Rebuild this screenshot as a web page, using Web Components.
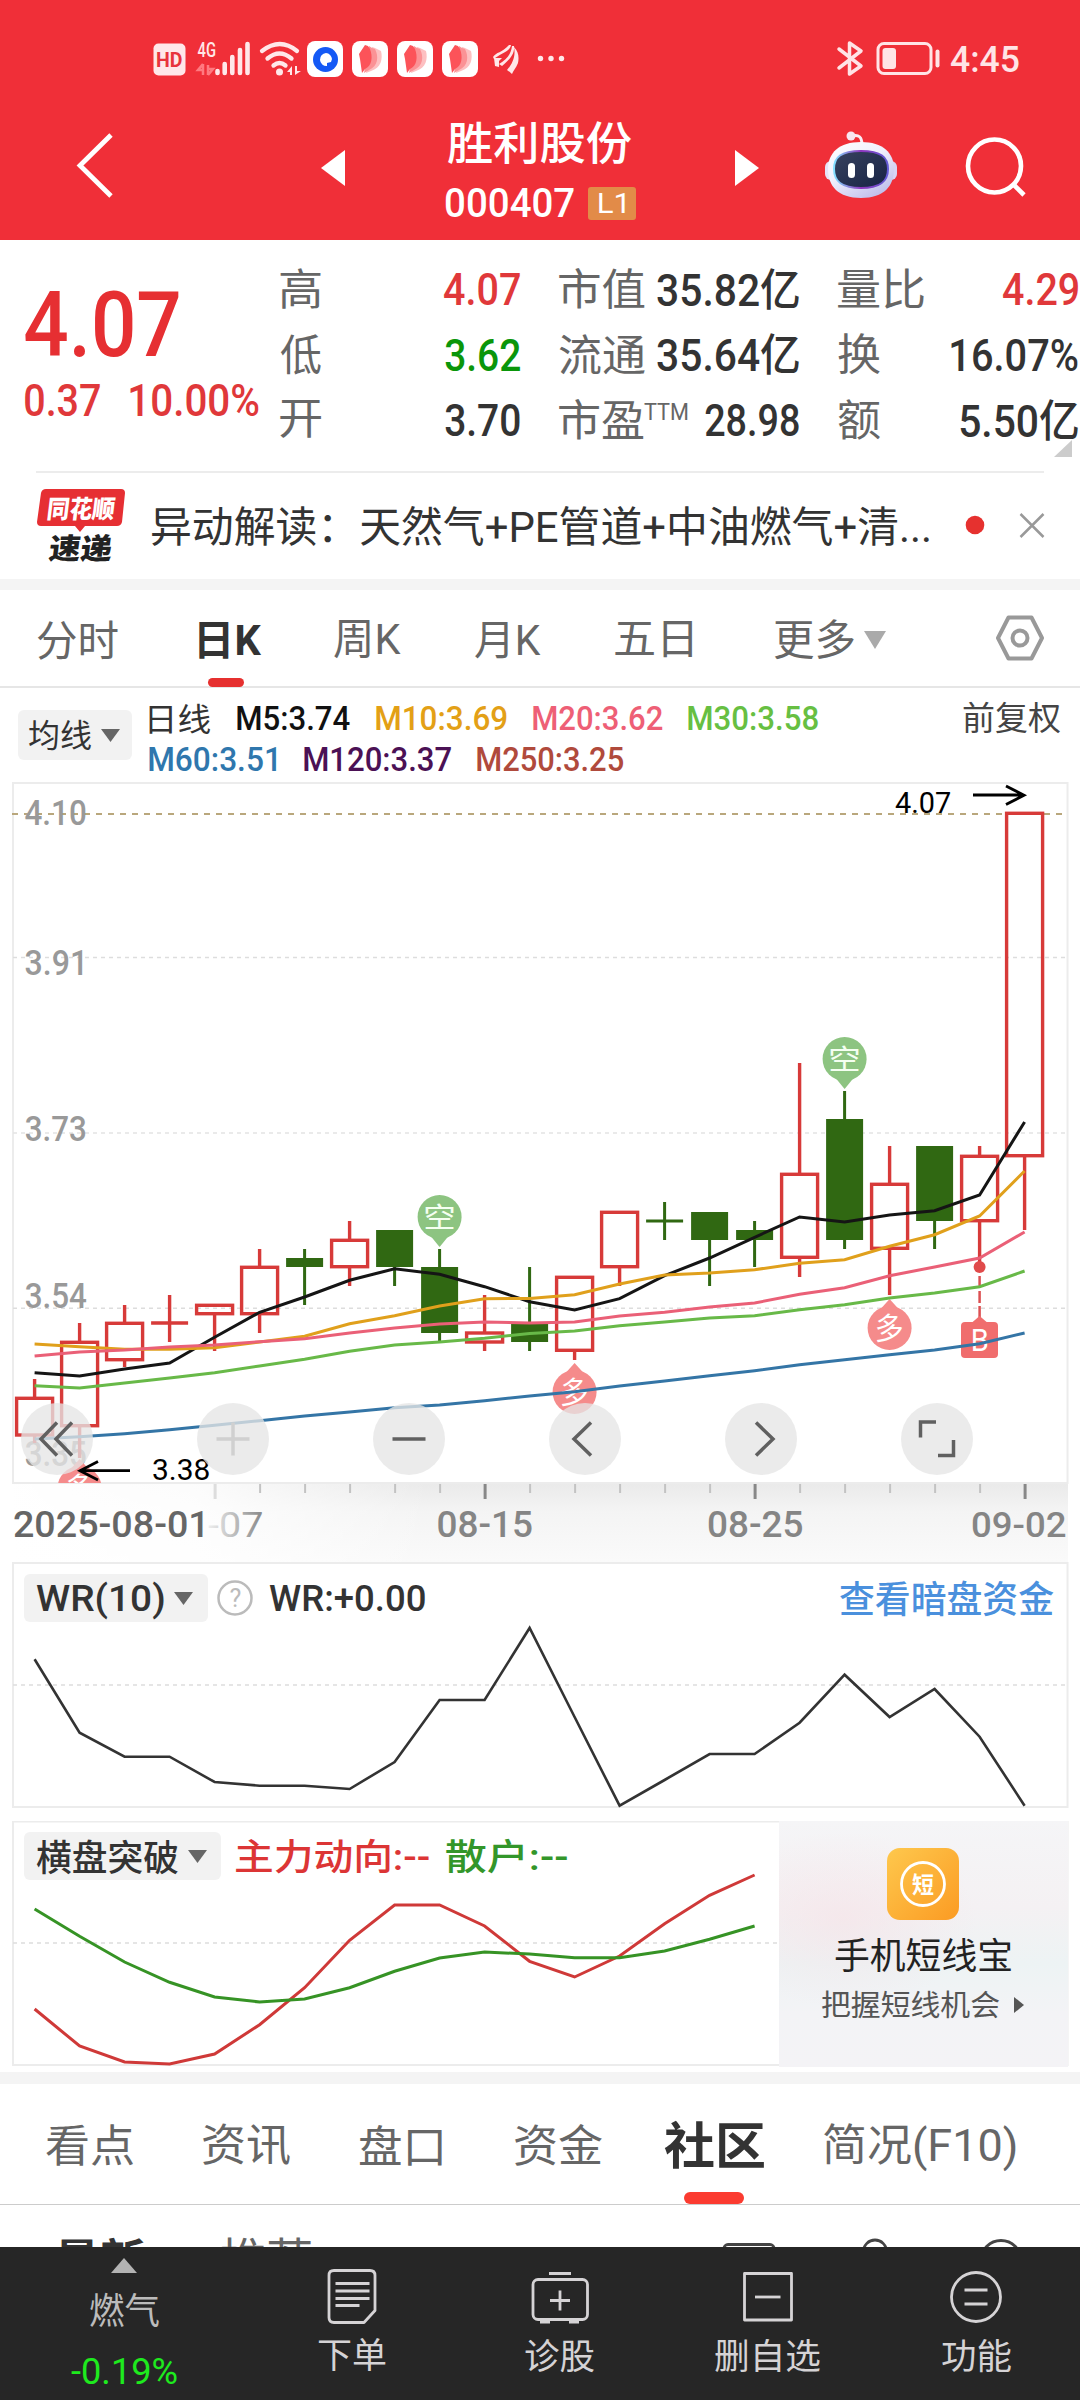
<!DOCTYPE html>
<html lang="zh-CN">
<head>
<meta charset="utf-8">
<title>胜利股份 000407</title>
<style>
html,body{margin:0;padding:0}
body{width:1080px;height:2400px;overflow:hidden;background:#fff;font-family:Roboto,"Noto Sans CJK SC",sans-serif;color:#333}
</style>
</head>
<body>
<stock-app></stock-app>
<script>
const FAMILY = 'Roboto, "Noto Sans CJK SC", sans-serif';
const ctx = document.createElement('canvas').getContext('2d');
// Ink bounds of a string, so labels can be fitted to an exact drawn width.
function ink(text, size, weight) {
  ctx.font = `${weight} ${size}px ${FAMILY}`;
  const m = ctx.measureText(text);
  return { left: -m.actualBoundingBoxLeft, width: m.actualBoundingBoxRight + m.actualBoundingBoxLeft, up: m.actualBoundingBoxAscent, down: m.actualBoundingBoxDescent };
}
function svgText(x, base, w, size, text, fill, weight = 400, extra = '') {
  const b = ink(text, size, weight), k = w / b.width;
  return `<text transform="translate(${x - b.left * k} ${base}) ${extra} scale(${k} 1)" font-family='${FAMILY}' font-size="${size}" font-weight="${weight}" fill="${fill}">${text}</text>`;
}

// <fit-text w s b gap>: one line of text, w = drawn width, s = size, b = weight, gap = space before it
customElements.define('fit-text', class extends HTMLElement {
  connectedCallback() {
    if (this.shadowRoot) return;
    const w = +this.getAttribute('w'), s = +this.getAttribute('s'), wt = this.getAttribute('b') || 400;
    const b = ink(this.textContent, s, wt), k = w / b.width;
    const dy = (b.up - b.down) / 2 - 0.3418 * s;
    this.attachShadow({ mode: 'open' }).innerHTML = `<style>
      :host{display:block;flex:none;width:${w}px;height:${s}px;line-height:${s}px;font-size:${s}px;font-weight:${wt};margin-left:${this.getAttribute('gap') || 0}px;color:${this.getAttribute('c') || 'inherit'}}
      span{display:inline-block;white-space:nowrap;transform-origin:0 0;transform:translate(${-b.left * k}px,${dy}px) scaleX(${k})}
    </style><span><slot></slot></span>`;
  }
});

function define(name, css, html) {
  customElements.define(name, class extends HTMLElement {
    connectedCallback() {
      if (this.shadowRoot) return;
      this.attachShadow({ mode: 'open' }).innerHTML = `<style>:host{display:block}svg{display:block;flex:none}.row{display:flex;align-items:center}${css}</style>${typeof html === 'function' ? html(this) : html}`;
    }
  });
}

const feather = `<rect width="36" height="36" rx="8" fill="#fff"/><path d="M20 6l3 1 2 1 2 1 2 1c2 8 0 17-10 20l-5 2z" fill="#fdc0c1"/><path d="M17 5l3 2 3 1c4 8 3 17-6 21l-5 3z" fill="#fb9295"/><path d="M13 4l3 1 2 3c3 8 2 17-5 20l-3 4-2-14-1-5z" fill="#fc5359"/>`;
define('status-bar', `:host{height:118px;color:#ffe4e6}.row{height:118px}`, `
<div class="row">
 <svg width="575" height="118" viewBox="0 0 575 118" fill="#ffe7e9">
  <rect x="153.500" y="43.500" width="32" height="32" rx="5"/>${svgText(157, 67, 25.500, 20, 'HD', '#e8343c', 700)}
  ${svgText(197.500, 57, 18, 20, '4G', '#ffe7e9', 500)}
  <path d="M203 64v11M203 64l-5 6h5M208 75V65M208 75l5-6h-5" stroke="#ff7a80" stroke-width="2.500" fill="none"/>
  <g stroke="#ffe7e9" stroke-width="4.600" stroke-linecap="round"><path d="M217.500 71v2M224.700 64v9M232.300 57v16M240 50v23M247.500 44v29"/></g>
  <g fill="none" stroke="#ffe7e9" stroke-width="4.300" stroke-linecap="round"><path d="M262 51q18-14 35 0M267.500 58.500q12-10 24 0M273.500 65.500q6-5 12 0"/></g><circle cx="279.500" cy="72" r="3.500"/>
  <path d="M292 66v9h-2v-3h-3zM295 75v-9h2v5h4z"/>
  <g transform="translate(307 41)"><rect width="36" height="36" rx="8" fill="#fff"/><circle cx="18.500" cy="18.500" r="12.500" fill="#1459f5"/><path d="M19 12a6.500 6.500 0 1 0 1 13v-3l4-1 1-3a6.500 6.500 0 0 0-6-6z" fill="#fff"/></g>
  <g transform="translate(352 41)">${feather}</g><g transform="translate(397 41)">${feather}</g><g transform="translate(442 41)">${feather}</g>
  <path d="M493 57c3-5 9-4 16-12h2c-1 7-12 9-17 14zM499 64c7-4 12-9 13-18l2 0c1 9-6 15-12 20zM507 70c5-6 9-13 7-23 5 5 5 11 4 16-2 5-5 8-6 11-2-2-4-3-5-4zM494 58l8 0-3 3 0 6-4-1z"/>
  <circle cx="540.500" cy="58.500" r="2.700"/><circle cx="551" cy="58.500" r="2.700"/><circle cx="561.500" cy="58.500" r="2.700"/>
 </svg>
 <svg width="110" height="118" viewBox="832 0 110 118" style="margin-left:257px" fill="none" stroke="#ffe4e6" stroke-width="3.500" stroke-linejoin="round" stroke-linecap="round">
  <path d="M839 49l22 17-11.500 8V43L861 51l-22 17"/>
  <rect x="878" y="43.500" width="53" height="30" rx="6" stroke-width="3"/><rect x="882.500" y="48" width="13.500" height="21" rx="3" fill="#ffe4e6" stroke="none"/><path d="M937.500 51.500v14" stroke-width="4"/>
 </svg>
 <fit-text w="68" s="37" b="500" gap="9">4:45</fit-text>
</div>`);

define('stock-header', `:host{height:122px;color:#fff}.row{height:122px}.mid{width:188px;margin-left:103px;height:122px;display:flex;flex-direction:column}.code{margin-top:22px;height:33px}.l1{width:48px;height:33px;background:#e28b48;border-radius:3px;margin-left:12px;display:flex;align-items:center;justify-content:center}`, `
<div class="row">
 <svg width="345" height="122" viewBox="0 118 345 122"><path d="M111 135L80 165.500 111 196" fill="none" stroke="#fff" stroke-width="4.800"/><path d="M345 150v36L321 168z" fill="#fff"/></svg>
 <div class="mid"><fit-text w="184" s="45" b="500" style="margin-top:2px">胜利股份</fit-text>
  <div class="row code"><fit-text w="128" s="41" b="500" style="margin-left:-2px;width:130px">000407</fit-text><div class="l1"><fit-text w="26" s="27">L1</fit-text></div></div></div>
 <svg width="345" height="122" viewBox="735 118 345 122" style="margin-left:99px">
  <defs><linearGradient id="face" x2="1" y2="1"><stop stop-color="#38425f"/><stop offset="1" stop-color="#172344"/></linearGradient><linearGradient id="rim"><stop stop-color="#83dfff"/><stop offset=".5" stop-color="#8d35bc"/><stop offset="1" stop-color="#625bd5"/></linearGradient><linearGradient id="head" x2=".7" y2="1"><stop stop-color="#fff"/><stop offset=".5" stop-color="#f0effc"/><stop offset="1" stop-color="#c0bfeb"/></linearGradient></defs>
  <path d="M735 150v36l24-18z" fill="#fff"/>
  <path d="M852 136q10-3 10 9" fill="none" stroke="#fbeef5" stroke-width="3"/><circle cx="851" cy="136" r="4.500" fill="#f8e6f0"/>
  <rect x="825" y="161" width="12" height="19" rx="6" fill="#e6e3f7"/><rect x="885" y="161" width="12" height="19" rx="6" fill="#d8d5f4"/>
  <path d="M861 142c22 0 33 11 33 27 0 17-10 29-33 29s-33-12-33-29c0-16 11-27 33-27z" fill="url(#head)"/>
  <path d="M861 151c20 0 27 6 27 18s-7 19-27 19-27-7-27-19 7-18 27-18z" fill="url(#face)" stroke="url(#rim)" stroke-width="2"/>
  <rect x="848" y="163" width="7" height="15" rx="3.500" fill="#fff"/><rect x="867" y="163" width="7" height="15" rx="3.500" fill="#fff"/>
  <g fill="none" stroke="#fff" stroke-width="4.600"><circle cx="994.500" cy="166" r="26.500"/><path d="M1013 184l11 11"/></g>
 </svg>
</div>`);

define('quote-panel', `:host{height:231px}.wrap{display:flex;height:231px;position:relative}.left{width:255px;margin-left:25px;padding-top:39px;box-sizing:border-box;flex:none}.left .row{margin-top:7.500px}.col{width:240px;padding-top:16px;margin-right:39px;flex:none;color:#333}.col .row{justify-content:space-between;height:65.600px}.g{color:#666}svg{position:absolute;left:1054px;top:200px}.last{margin:0;width:240px}`, `
<div class="wrap">
 <div class="left"><fit-text w="154" s="90" b="500" c="#e62f32">4.07</fit-text>
  <div class="row" style="color:#e0383a"><fit-text w="75" s="45" b="500">0.37</fit-text><fit-text w="129" s="45" b="500" gap="30">10.00%</fit-text></div></div>
 <div class="col">
  <div class="row"><fit-text class="g" w="41" s="43">高</fit-text><fit-text w="76" s="45" b="500" c="#e0383a">4.07</fit-text></div>
  <div class="row"><fit-text class="g" w="41" s="43">低</fit-text><fit-text w="75" s="45" b="500" c="#0a960a">3.62</fit-text></div>
  <div class="row"><fit-text class="g" w="41" s="43">开</fit-text><fit-text w="75" s="45" b="500">3.70</fit-text></div>
 </div>
 <div class="col">
  <div class="row"><fit-text class="g" w="86" s="43">市值</fit-text><fit-text w="142" s="44" b="500">35.82亿</fit-text></div>
  <div class="row"><fit-text class="g" w="86" s="43">流通</fit-text><fit-text w="142" s="44" b="500">35.64亿</fit-text></div>
  <div class="row"><fit-text class="g" w="85" s="43">市盈</fit-text><fit-text class="g" w="44" s="23" style="margin:-16px 17px 0 0">TTM</fit-text><fit-text w="94" s="45" b="500">28.98</fit-text></div>
 </div>
 <div class="col last">
  <div class="row"><fit-text class="g" w="86" s="43">量比</fit-text><fit-text w="75" s="45" b="500" c="#e0383a">4.29</fit-text></div>
  <div class="row"><fit-text class="g" w="42" s="43">换</fit-text><fit-text w="127" s="45" b="500">16.07%</fit-text></div>
  <div class="row"><fit-text class="g" w="42" s="43">额</fit-text><fit-text w="118" s="44" b="500">5.50亿</fit-text></div>
 </div>
 <svg width="18" height="17"><path d="M18 0v17H0z" fill="#ccc"/></svg>
</div>`);

define('news-strip', `:host{height:108px;border-bottom:11px solid #f4f4f4}.line{height:1.500px;background:#ececec;margin:0 36px}.row{height:107px;padding-left:36px}`, `
<div class="line"></div><div class="row">
<svg width="92" height="80" viewBox="36 486 92 80"><path d="M46 489h75q4 0 4 4l-3 29q-1 4-5 4H85l-5 6-5-6H41q-4 0-4-4l4-29q1-4 5-4z" fill="#e62f33"/>
${svgText(47, 518, 67, 25, '同花顺', '#fff', 900, 'skewX(-7)')}${svgText(48, 559, 63, 29, '速递', '#222', 900, 'skewX(-7)')}</svg>
<fit-text w="777" s="42" gap="24">异动解读：天然气+PE管道+中油燃气+清...</fit-text>
<svg width="150" height="40" viewBox="929 506 150 40"><circle cx="975" cy="525" r="9.300" fill="#e6312f"/><path d="M1020.500 514l23 23M1043.500 514l-23 23" stroke="#999" stroke-width="2.500"/></svg>
</div>`);
define('period-tabs', `:host{height:96px;border-bottom:2px solid #e6e6e6;color:#666}.row{height:96px;padding-left:37px;padding-top:3px;box-sizing:border-box}.on{position:relative;color:#333}.on i{position:absolute;left:9px;top:59px;width:36px;height:9px;border-radius:5px;background:#e6302f}`, `
<div class="row"><fit-text w="81" s="42">分时</fit-text>
<div class="on" style="margin-left:81px"><fit-text w="62" s="42" b="700">日K</fit-text><i></i></div>
<fit-text w="67" s="42" gap="73">周K</fit-text><fit-text w="66" s="42" gap="74">月K</fit-text><fit-text w="77" s="42" gap="74">五日</fit-text><fit-text w="80" s="42" gap="82">更多</fit-text>
<svg width="22" height="18" style="margin-left:10px"><path d="M0 0h22L11 18z" fill="#aaa"/></svg>
<svg width="50" height="48" viewBox="0 0 50 48" style="margin-left:109px;margin-top:-3px" fill="none" stroke="#999" stroke-width="4" stroke-linejoin="round"><path d="M13.500 3.500h23L47 24 36.500 44.500h-23L3 24z"/><circle cx="25" cy="24" r="7.500"/></svg></div>`);

define('pick-button', `:host{flex:none}.row{height:100%;background:#f2f2f2;border-radius:6px;color:#333;box-sizing:border-box}`, el => `
<div class="row" style="padding-left:${el.getAttribute('pad')}px"><slot></slot><svg width="19" height="13" style="margin-left:10px"><path d="M0 0h19l-9.500 13z" fill="#666"/></svg></div>`);
define('ma-legend', `:host{height:94px}.all{display:flex;height:94px}pick-button{width:114px;height:50px;margin:22px 17px 0 18px}.lines{width:814px;padding-top:10px}.row{height:40.500px}`, `
<div class="all"><pick-button pad="11"><fit-text w="62" s="32">均线</fit-text></pick-button>
<div class="lines"><div class="row"><fit-text w="61" s="32">日线</fit-text><fit-text w="113" s="34" b="500" gap="27" c="#111">M5:3.74</fit-text><fit-text w="131" s="34" b="500" gap="26" c="#e3a016">M10:3.69</fit-text><fit-text w="130" s="34" b="500" gap="26" c="#ee5f76">M20:3.62</fit-text><fit-text w="130" s="34" b="500" gap="25" c="#67bf42">M30:3.58</fit-text></div>
<div class="row"><fit-text w="127" s="34" b="500" c="#2f77ad">M60:3.51</fit-text><fit-text w="147" s="34" b="500" gap="28" c="#4b1155">M120:3.37</fit-text><fit-text w="146" s="34" b="500" gap="26" c="#b04a3c">M250:3.25</fit-text></div></div>
<fit-text w="97" s="33" c="#444" style="margin-top:13px">前复权</fit-text></div>`);

const X = i => 34.600 + 45 * i;
const poly = (pts, c, w = 3) => `<polyline fill="none" stroke="${c}" stroke-width="${w}" points="${pts.map((y, i) => X(i) + ',' + y).join(' ')}"/>`;
// [direction, body top, body bottom, high, low]
const candles = [['r',1398.3,1435,1379,1443],['r',1342.3,1425.7,1323,1458],['r',1323.3,1359.7,1305,1367],['r',1323,1323,1295,1342],['r',1305.3,1313.7,1305,1351],['r',1267.3,1313.7,1249,1333],['g',1258,1267,1249,1305],['r',1240.3,1266.7,1221,1286],['g',1230,1267,1230,1286],['g',1267,1333,1249,1341],['r',1333,1342,1295,1351],['g',1324,1342,1267,1351],['r',1277.3,1350.3,1277,1360],['r',1212.3,1266.7,1212,1286],['g',1221,1221,1202,1240],['g',1212,1240,1212,1286],['g',1230,1240,1221,1267],['r',1174.3,1257.3,1063,1277],['g',1119,1240,1091,1249],['r',1184.3,1248.3,1146,1295],['g',1146,1221,1146,1249],['r',1156.3,1220.7,1146,1267],['r',813.3,1155.7,813,1230]];
function candle([d, t, b, h, l], i) {
  const x = X(i), c = d === 'r' ? '#d73a39' : '#306812', sw = d === 'r' ? 3.400 : 3;
  if (t === b) return `<path d="M${x} ${h}V${l}M${x - 18.500} ${t}h37" stroke="${c}" stroke-width="${sw}"/>`;
  return `<path d="M${x} ${h}V${t}M${x} ${b}V${l}" stroke="${c}" stroke-width="${sw}"/>` + (d === 'r' ? `<rect x="${x - 18}" y="${t}" width="36" height="${b - t}" fill="none" stroke="${c}" stroke-width="${sw}"/>` : `<rect x="${x - 18.500}" y="${t}" width="37" height="${b - t}" fill="${c}"/>`);
}
const bear = (x, y) => `<g opacity=".9"><path d="M${x - 9} ${y + 19}L${x} ${y + 30}l9-11z" fill="#81be74"/><circle cx="${x}" cy="${y}" r="22" fill="#81be74"/>${svgText(x - 14, y + 11, 28, 29, '空', '#f4fff0', 400)}</g>`;
const bull = (x, y) => `<path d="M${x - 9} ${y - 19}L${x} ${y - 29}l9 10z" fill="#f58b8b"/><circle cx="${x}" cy="${y}" r="22" fill="#f58b8b"/>${svgText(x - 13, y + 11, 26, 30, '多', '#fff', 400)}`;
const M5=[1372.7,1376,1369,1363,1337.3,1312.3,1297,1280.3,1268.7,1274.3,1286.7,1301.7,1310,1298.7,1275.7,1258,1237.3,1217,1222,1215,1210.7,1195,1122];
const M10=[1344,1346.7,1349.3,1349.3,1347.7,1342,1336.3,1323.7,1315.7,1306,1298.7,1298.5,1294.7,1284,1275,1273,1269.7,1263.3,1259.7,1246.3,1234.7,1216,1171];
const M20=[1356,1352,1350,1347,1345,1341.7,1338.7,1333,1328,1324,1322,1323,1322,1316,1312.3,1307,1303,1294.3,1287.7,1275.7,1267,1258,1232];
const M30=[1385.7,1388,1383,1378,1372.7,1366,1359.3,1351.3,1345,1342,1338.3,1333.5,1331,1325.7,1322,1318,1315.7,1309.7,1304.7,1298,1293,1286.7,1271];
const M60=[1439,1436.7,1433.7,1429.7,1425.3,1420.7,1416,1412,1407.7,1405,1400.7,1396,1391.7,1386,1381,1375.7,1370.7,1364.7,1359.7,1354.7,1350,1343.7,1333];
const grid = (y, x2 = 1067, c = '#ddd') => `<path d="M13 ${y}H${x2}" stroke="${c}" stroke-width="1.500" stroke-dasharray="4 4"/>`;

define('kline-chart', `:host{height:780px;position:relative}.tools{position:absolute;left:21px;top:621px;display:flex;gap:104px}.tools svg{border-radius:50%;background:rgba(230,230,230,.78)}`, () => `
<svg width="1080" height="780" viewBox="0 782 1080 780">
<defs><clipPath id="plot"><rect x="12" y="782" width="1056" height="701"/></clipPath>
<linearGradient id="shade" x2="0" y2="1"><stop stop-color="#eaeaea"/><stop offset=".35" stop-color="#f4f4f4"/><stop offset="1" stop-color="#fafafa"/></linearGradient>
<linearGradient id="veil"><stop stop-color="#fff"/><stop offset=".45" stop-color="#fff" stop-opacity=".85"/><stop offset="1" stop-color="#fff" stop-opacity="0"/></linearGradient>
<linearGradient id="fade"><stop stop-color="#eee"/><stop offset="1" stop-color="#888"/></linearGradient></defs>
<rect x="13" y="1484" width="1055" height="78" fill="url(#shade)"/><rect x="0" y="1484" width="430" height="78" fill="url(#veil)"/>
<rect x="13" y="783" width="1054.500" height="700" fill="#fff" stroke="#ececec" stroke-width="2"/>
${grid(957.5)}${grid(1133, 1067, '#e4e4e4')}${grid(1308.300)}
<path d="M12 814H1067" stroke="#b9a77c" stroke-width="2" stroke-dasharray="6 6"/>
${svgText(24.500, 825, 61, 36, '4.10', '#999', 500)}${svgText(25.500, 975, 57, 36, '3.91', '#999', 500)}${svgText(25.500, 1141, 60, 36, '3.73', '#999', 500)}${svgText(25.500, 1308, 61, 36, '3.54', '#999', 500)}${svgText(25.500, 1466, 60, 36, '3.35', '#999', 500)}
<g clip-path="url(#plot)">
${candles.map(candle).join('')}
${bear(X(9), 1217)}${bear(X(18), 1059)}${bull(X(12), 1392)}${bull(X(19), 1328)}${bull(X(1), 1488)}
<circle cx="${X(21)}" cy="1267" r="6" fill="#e04a4a"/><path d="M${X(21)} 1276V1318" stroke="#dc5052" stroke-width="2.500" stroke-dasharray="12 3"/>
<path d="M${X(21) - 7} 1322l7-6 7 6z" fill="#f06d6d"/><rect x="961" y="1322" width="37" height="36" rx="4" fill="#f06d6d"/>${svgText(972.500, 1351, 15, 31, 'B', '#fff', 400)}
${poly(M60, '#3475a6')}${poly(M30, '#68b948')}${poly(M5, '#151515')}${poly(M10, '#e0a01c')}${poly(M20, '#ea6077')}
</g>
<g fill="none" stroke="#000" stroke-width="2.800"><path d="M973 795h50M1006 786l18 9.300-18 9.300M130 1470.700H80M98 1461.500l-18 9.300 18 9.300"/></g>
${svgText(895, 813, 56, 29, '4.07', '#000')}${svgText(153, 1480, 56, 29, '3.38', '#000')}
${Array.from({ length: 19 }, (_, k) => k + 4).map(i => `<path d="M${X(i) + .5} 1484v${i % 6 === 4 ? 15 : 9}" stroke="${i === 4 ? '#ddd' : i % 6 === 4 ? '#888' : '#c3c3c3'}" stroke-width="${i % 6 === 4 ? 3 : 2}"/>`).join('')}
${svgText(208, 1537, 54, 36, '-07', 'url(#fade)', 400)}${svgText(14, 1537, 189, 36, '2025-08-01', '#666', 500)}${svgText(437.500, 1537, 94, 36, '08-15', '#858585', 500)}${svgText(708, 1537, 94, 36, '08-25', '#858585', 500)}${svgText(972, 1537, 94, 36, '09-02', '#858585', 500)}
</svg>
<div class="tools">${[
 ['M36 20L20 36.500 36 53M51 20L35 36.500 51 53'], ['M36 20v33M19.500 36.500h33', '#d0d0d0'], ['M19.500 36.500h33'], ['M42 20L25 36.500 42 53'], ['M31 20l17 16.500L31 53'], ['M35 19.500H19.500V35M37 53h15.500V37.500']
].map(([d, c = '#606060']) => `<svg width="72" height="72" viewBox="0 0.500 72 72"><path d="${d}" fill="none" stroke="${c}" stroke-width="3.500"/></svg>`).join('')}</div>`);

define('wr-panel', `.stack{display:grid}.stack>*{grid-area:1/1}.bar{height:48px;margin-top:12px;padding-left:24px}pick-button{width:184px;height:48px}`, () => `
<div class="stack"><svg width="1080" height="259" viewBox="0 1562 1080 259"><rect x="13" y="1563" width="1054.500" height="244" fill="#fff" stroke="#ececec" stroke-width="2"/>${grid(1685)}
${poly([1659.3,1732.7,1756.7,1756.7,1782,1785.7,1785.7,1789,1762,1700,1700,1628,1717,1805.7,1780,1754,1754,1722.7,1674.7,1717,1689,1736.7,1805.7], '#333', 2.600)}</svg>
<div class="row bar"><pick-button pad="12"><fit-text w="128" s="36" b="500" style="margin-top:5px">WR(10)</fit-text></pick-button>
<svg width="36" height="38" viewBox="0 0 36 38" style="margin-left:9px"><circle cx="18" cy="19" r="16.500" fill="none" stroke="#bbb" stroke-width="2.500"/>${svgText(12.500, 28, 11, 25, '?', '#bbb')}</svg>
<fit-text w="156" s="36" b="500" gap="16">WR:+0.00</fit-text><fit-text w="214" s="37" b="500" gap="415" c="#4a90dd">查看暗盘资金</fit-text></div></div>`);

define('flow-panel', `:host{height:251px;border-bottom:12px solid #f4f4f4}.stack{display:grid}.stack>*{grid-area:1/1}.bar{height:48px;margin-top:11px;padding-left:24px;align-self:start}pick-button{width:197px;height:48px}
.promo{justify-self:start;margin-left:779px;width:289px;height:246px;background:radial-gradient(ellipse at 22% 40%,rgba(246,224,229,.55),transparent 42%),linear-gradient(#f5f5f7 0,#f4f1f3 35%,#edf3f4 58%,#f3f3f6 78%,#f4f3f6);display:flex;flex-direction:column;align-items:center}`, () => `
<div class="stack"><svg width="1080" height="247" viewBox="0 1821 1080 247"><rect x="13" y="1821.500" width="1054.500" height="243.500" fill="#fff" stroke="#ececec" stroke-width="2"/>${grid(1943, 779)}
${poly([2009,2046,2062,2064,2054,2024.7,1987.7,1940.3,1905,1905,1926,1961.3,1977,1956,1923.7,1895.3,1875], '#cf3938')}
${poly([1909,1936.3,1962,1982.3,1997,2002,1999,1987.7,1971.3,1958,1952,1954,1957.7,1957.7,1951,1939.3,1926], '#369325')}</svg>
<div class="row bar"><pick-button pad="12"><fit-text w="142" s="36" b="500" style="margin-top:1px">横盘突破</fit-text></pick-button><fit-text w="194" s="36" b="500" gap="14" c="#dc3535">主力动向:--</fit-text><fit-text w="121" s="36" b="500" gap="17" c="#33962a">散户:--</fit-text></div>
<div class="promo"><svg width="72" height="72" style="margin-top:27px;margin-left:-2px"><defs><linearGradient id="gold" x2="1" y2="1"><stop stop-color="#fec84d"/><stop offset="1" stop-color="#fb9b23"/></linearGradient></defs><rect width="72" height="72" rx="13" fill="url(#gold)"/><circle cx="36" cy="36" r="21.500" fill="none" stroke="#fff" stroke-width="2.800"/>${svgText(25, 44.500, 22, 23, '短', '#fff', 700)}</svg>
<fit-text w="176" s="36" style="margin:17px 2px 0 0" c="#222">手机短线宝</fit-text><div class="row" style="margin-top:17px;margin-left:-2px"><fit-text w="177" s="29" c="#555">把握短线机会</fit-text><svg width="10" height="16" style="margin-left:15px"><path d="M0 0l10 8-10 8z" fill="#555"/></svg></div></div></div>`);

define('section-tabs', `:host{height:120px;border-bottom:1.500px solid #ccc;color:#666}.row{height:120px;padding:2px 0 0 46px;box-sizing:border-box}.on{position:relative;color:#333;margin-left:62px}.on i{position:absolute;left:20px;top:72px;width:60px;height:12px;border-radius:6px;background:#fb3b30}`, `
<div class="row"><fit-text w="87" s="44">看点</fit-text><fit-text w="87" s="44" gap="70">资讯</fit-text><fit-text w="83" s="44" gap="69">盘口</fit-text><fit-text w="87" s="44" gap="73">资金</fit-text><div class="on"><fit-text w="100" s="50" b="700">社区</fit-text><i></i></div><fit-text w="192" s="44" gap="60" style="margin-top:6px">简况(F10)</fit-text></div>`);
define('feed-head', `:host{height:41.500px;overflow:hidden}.all{display:flex;height:80px;padding-left:55px}`, `
<div class="all"><fit-text w="90" s="46" b="700" style="margin-top:31px" c="#333">最新</fit-text><fit-text w="90" s="46" gap="76" style="margin-top:31px" c="#666">推荐</fit-text>
<svg width="380" height="80" viewBox="700 2205.500 380 80" style="margin-left:389px" fill="none" stroke="#444" stroke-width="2.800"><rect x="724" y="2245" width="50" height="40" rx="4"/><circle cx="875" cy="2252" r="11.500"/><circle cx="1001" cy="2261" r="20"/></svg></div>`);

define('bottom-bar', `:host{height:153px;background:#262626;color:#d5d3d5}.all{display:flex;height:153px}.c{display:flex;flex-direction:column;align-items:center;width:208px}.first{width:248px}.q{color:#bbb}`, () => {
  const item = (icon, label, w, cell) => `<div class="c" style="width:${cell}px"><svg width="60" height="58" viewBox="-30 0 60 58" style="margin-top:20px" fill="none" stroke="#d5d3d5" stroke-width="2.800" stroke-linejoin="round">${icon}</svg><fit-text w="${w}" s="35" style="margin-top:13px">${label}</fit-text></div>`;
  return `<div class="all"><div class="c first"><svg width="26" height="15" style="margin-top:11px"><path d="M13 0l13 15H0z" fill="#b3b3b3"/></svg><fit-text class="q" w="69" s="36" style="margin-top:19px">燃气</fit-text><fit-text w="106" s="37" c="#1eea1e" style="margin-top:25px">-0.19%</fit-text></div>
  ${item('<path d="M-18 3.500h36q5 0 5 5v35l-11 12h-30q-5 0-5-5v-42q0-5 5-5zM-16.500 16.500h34M-16.500 24h34M-16.500 31.500h34M-16.500 38.500h24"/>', '下单', 68, 208)}
  ${item('<rect x="-27" y="12.500" width="54.500" height="40" rx="5"/><path d="M-11 6.500h22M-10 33.500h20M0 23.500v20M-20 55h10M9 55h10"/>', '诊股', 69, 207)}
  ${item('<rect x="-23.500" y="6.500" width="47" height="46.500"/><path d="M-13 30h25.500"/>', '删自选', 105, 209)}
  ${item('<circle cx="0" cy="30" r="24.500"/><path d="M-11.500 23h23M-11.500 37h23"/>', '功能', 69, 208)}</div>`;
});

define('stock-app', `:host{width:1080px;height:2400px;overflow:hidden;background:#fff}.red{background:#f02f38;height:240px}`, `
<div class="red"><status-bar></status-bar><stock-header></stock-header></div>
<quote-panel></quote-panel><news-strip></news-strip><period-tabs></period-tabs><ma-legend></ma-legend>
<kline-chart></kline-chart><wr-panel></wr-panel><flow-panel></flow-panel><section-tabs></section-tabs><feed-head></feed-head><bottom-bar></bottom-bar>`);
</script>
</body>
</html>
